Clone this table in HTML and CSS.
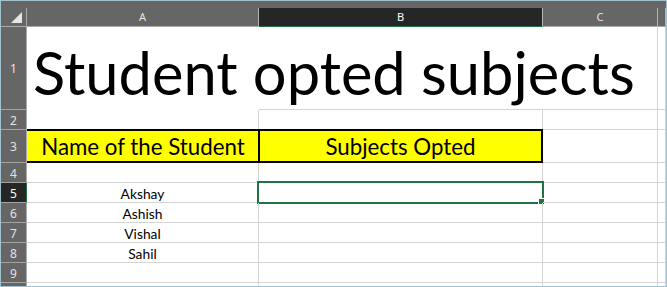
FILE: index.html
```html
<!DOCTYPE html>
<html lang="en">
<head>
<meta charset="utf-8">
<title>Student opted subjects</title>
<link rel="stylesheet" href="styles.css">
</head>
<body>
<div class="window">
  <div class="strip"></div>
  <div class="sheet">
    <!-- column headers -->
    <div class="corner">
      <svg class="corner-tri" width="12" height="12" viewBox="0 0 12 12"><polygon points="11,0 11,11 0,11" fill="#e6e6e6"/></svg>
    </div>
    <div class="ch">A</div>
    <div class="ch ch-active">B</div>
    <div class="ch">C</div>
    <div class="ch"></div>

    <!-- row 1 -->
    <div class="rh">1</div>
    <div class="c c-open"><span class="title">Student opted subjects</span></div>
    <div class="c c-nr"></div>
    <div class="c"></div>
    <div class="c"></div>

    <!-- row 2 -->
    <div class="rh">2</div>
    <div class="c c-nb"></div>
    <div class="c"></div>
    <div class="c"></div>
    <div class="c"></div>

    <!-- row 3 -->
    <div class="rh">3</div>
    <div class="c band band-a"><span class="head">Name of the Student</span></div>
    <div class="c band band-b"><span class="head">Subjects Opted</span></div>
    <div class="c"></div>
    <div class="c"></div>

    <!-- row 4 -->
    <div class="rh">4</div>
    <div class="c"></div>
    <div class="c"></div>
    <div class="c"></div>
    <div class="c"></div>

    <!-- row 5 -->
    <div class="rh rh-active">5</div>
    <div class="c"><span class="name">Akshay</span></div>
    <div class="c c-sel"><div class="sel"><div class="handle"></div></div></div>
    <div class="c"></div>
    <div class="c"></div>

    <!-- row 6 -->
    <div class="rh">6</div>
    <div class="c"><span class="name">Ashish</span></div>
    <div class="c"></div>
    <div class="c"></div>
    <div class="c"></div>

    <!-- row 7 -->
    <div class="rh">7</div>
    <div class="c"><span class="name">Vishal</span></div>
    <div class="c"></div>
    <div class="c"></div>
    <div class="c"></div>

    <!-- row 8 -->
    <div class="rh">8</div>
    <div class="c"><span class="name">Sahil</span></div>
    <div class="c"></div>
    <div class="c"></div>
    <div class="c"></div>

    <!-- row 9 -->
    <div class="rh">9</div>
    <div class="c"></div>
    <div class="c"></div>
    <div class="c"></div>
    <div class="c"></div>

    <!-- row 10 (cut off) -->
    <div class="rh rh-cut"></div>
    <div class="c c-cut"></div>
    <div class="c c-cut"></div>
    <div class="c c-cut"></div>
    <div class="c c-cut"></div>
  </div>
</div>
</body>
</html>
```

FILE: styles.css
```css
* {
  box-sizing: border-box;
}

html,
body {
  margin: 0;
  padding: 0;
  background: #ffffff;
}

.window {
  width: 667px;
  height: 287px;
  border: 1px solid #a3c2cf;
  overflow: hidden;
  display: flex;
  flex-direction: column;
  background: #ffffff;
}

.strip {
  height: 7px;
  flex: none;
  background: #666666;
}

.sheet {
  display: grid;
  grid-template-columns: 26px 232px 284px 115px 8px;
  /* header, rows 1-3, rows 4-9, partial row 10 */
  grid-template-rows: 19px 83px 20px 33px 20px 20px 20px 20px 20px 20px 3px;
  font-family: Lato, "Open Sans", sans-serif;
  color: #000000;
}

/* headers */
.corner {
  background: #666666;
  border-right: 1px solid #ababab;
  border-bottom: 1px solid #ababab;
  display: flex;
  align-items: flex-end;
  justify-content: flex-end;
  padding: 0 3px 2px 0;
}

.corner-tri {
  display: block;
}

.ch {
  background: #666666;
  border-right: 1px solid #b4b4b4;
  border-bottom: 1px solid #ababab;
  color: #e4e4e4;
  font-family: "Noto Sans", "Open Sans", sans-serif;
  font-size: 11px;
  line-height: 18px;
  text-align: center;
}

.ch-active {
  background: #262626;
  color: #ffffff;
  border-bottom: 1px solid #217346;
}

.rh {
  background: #666666;
  border-right: 1px solid #ababab;
  border-bottom: 1px solid #a3a3a3;
  color: #e4e4e4;
  font-family: "Noto Sans", "Open Sans", sans-serif;
  font-size: 12px;
  display: flex;
  align-items: center;
  justify-content: center;
  padding-top: 1px;
}

.rh-active {
  background: #262626;
  color: #ffffff;
  border-right: 1px solid #217346;
}

.rh-cut {
  border-bottom: 0;
}

/* cells */
.c {
  position: relative;
  border-right: 1px solid #d4d4d4;
  border-bottom: 1px solid #d4d4d4;
  display: flex;
  align-items: flex-end;
  justify-content: center;
}

.c-open {
  border-right: 0;
  border-bottom: 0;
  justify-content: flex-start;
  overflow: visible;
  z-index: 1;
  padding: 0 0 8px 6px;
}

.c-nr {
  border-right: 0;
}

.c-nb {
  border-bottom: 0;
}

.c-cut {
  border-bottom: 0;
}

.title {
  font-size: 59.6px;
  line-height: 60px;
  white-space: nowrap;
}

.band {
  background: #ffff00;
  margin-top: -1px;
  border-top: 2px solid #000000;
  border-bottom: 2px solid #000000;
  padding-bottom: 1.5px;
}

.band-a {
  border-right: 0;
}

.band-b {
  margin-left: -1px;
  border-left: 2px solid #000000;
  border-right: 2px solid #000000;
}

.head {
  font-size: 22.3px;
  line-height: 26px;
  white-space: nowrap;
}

.name {
  font-size: 13.8px;
  line-height: 17px;
}

/* active cell outline with fill handle */
.sel {
  position: absolute;
  left: -2px;
  top: -2px;
  width: 287px;
  height: 23px;
  border: 2px solid #217346;
}

.handle {
  position: absolute;
  right: -3px;
  bottom: -3px;
  width: 7px;
  height: 7px;
  background: #217346;
  border: 1px solid #ffffff;
}
```
